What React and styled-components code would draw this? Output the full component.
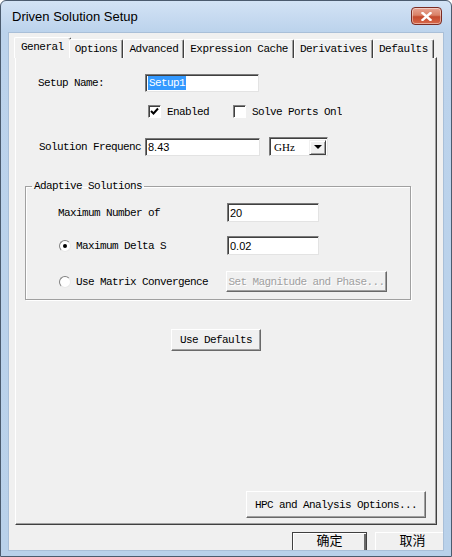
import styled, { createGlobalStyle } from "styled-components"

const GlobalStyle = createGlobalStyle`
  html, body { margin: 0; padding: 0; background: #ffffff; }
  #root { width: 452px; height: 557px; }
`

const mono = `"Liberation Mono", "DejaVu Sans Mono", monospace`

const Window = styled.div`
  width: 452px;
  height: 557px;
  box-sizing: border-box;
  display: flex;
  flex-direction: column;
  border: 1px solid #4b5b6e;
  border-radius: 6px 6px 0 0;
  background: linear-gradient(#d3e3f5 0px, #bcd3ec 30px, #b9d1ea 100%);
  overflow: hidden;
`

const TitleBar = styled.div`
  height: 29px;
  flex: none;
  display: flex;
  align-items: center;
  justify-content: space-between;
  padding: 0 9px 2px 11px;
`

const Title = styled.span`
  font-family: "Liberation Sans", Arial, sans-serif;
  font-size: 13px;
  color: #000;
  margin-top: 2px;
`

const CloseButton = styled.div`
  width: 31px;
  height: 18px;
  margin-top: 1px;
  border: 1px solid #7a2b22;
  border-radius: 4px;
  box-sizing: border-box;
  background: linear-gradient(#e8a493 0%, #d98167 45%, #c44a2e 55%, #d8694a 100%);
  box-shadow: inset 0 0 0 1px rgba(255, 255, 255, 0.45);
  display: flex;
  align-items: center;
  justify-content: center;
`

const Client = styled.div`
  flex: 1;
  margin: 0 7px 5px 7px;
  background: #f0f0f0;
  border: 1px solid #a9bfd8;
  display: flex;
  flex-direction: column;
  padding: 4px 6px 0 6px;
  overflow: hidden;
`

const TabStrip = styled.div`
  display: flex;
  align-items: flex-end;
  height: 21px;
  flex: none;
  padding-left: 1px;
  position: relative;
  z-index: 1;
  margin-bottom: -1px;
`

const Tab = styled.div`
  font-family: ${mono};
  font-size: 11px;
  letter-spacing: -0.5px;
  color: #000;
  box-sizing: border-box;
  height: ${p => (p.$active ? "21px" : "19px")};
  padding: ${p => (p.$active ? "0 6px" : "0 5px")};
  margin: ${p => (p.$active ? "0 -2px 0 -2px" : "0")};
  display: flex;
  align-items: center;
  padding-bottom: ${p => (p.$active ? "3px" : "1px")};
  background: #f0f0f0;
  border-top: 1px solid #ffffff;
  border-left: 1px solid #ffffff;
  border-right: 1px solid #404040;
  box-shadow: inset -1px 0 #a0a0a0;
  border-radius: 2px 2px 0 0;
  white-space: nowrap;
`

const Panel = styled.div`
  width: 422px;
  height: 468px;
  flex: none;
  box-sizing: border-box;
  border-top: 1px solid #ffffff;
  border-left: 1px solid #ffffff;
  border-right: 1px solid #404040;
  border-bottom: 1px solid #404040;
  box-shadow: inset -1px -1px #a0a0a0;
  display: flex;
  flex-direction: column;
  padding: 16px 0 0 0;
`

const Label = styled.span`
  font-family: ${mono};
  font-size: 11px;
  letter-spacing: -0.6px;
  color: ${p => (p.$disabled ? "#a0a0a0" : "#000")};
  width: ${p => p.$w || "auto"};
  flex: none;
  white-space: nowrap;
  overflow: hidden;
`

const Row = styled.div`
  display: flex;
  align-items: center;
  flex: none;
  margin-left: ${p => p.$left || 0}px;
  margin-top: ${p => p.$top || 0}px;
`

const TextBox = styled.div`
  width: ${p => p.$w}px;
  height: ${p => p.$h || 18}px;
  box-sizing: border-box;
  background: #ffffff;
  border-top: 1px solid #7a7a7a;
  border-left: 1px solid #7a7a7a;
  border-right: 1px solid #e3e3e3;
  border-bottom: 1px solid #e3e3e3;
  box-shadow: inset 1px 1px #404040;
  display: flex;
  align-items: center;
  padding-left: 2px;
  font-family: "Liberation Sans", Arial, sans-serif;
  font-size: 11px;
  color: #000;
`

const Selected = styled.span`
  background: #3399ff;
  color: #fff;
  font-family: ${mono};
  letter-spacing: -0.6px;
  padding: 1px 1px;
`

const Check = styled.div`
  width: 13px;
  height: 13px;
  box-sizing: border-box;
  background: #fff;
  border-top: 1px solid #808080;
  border-left: 1px solid #808080;
  border-right: 1px solid #ffffff;
  border-bottom: 1px solid #ffffff;
  box-shadow: inset 1px 1px #404040;
  display: flex;
  align-items: center;
  justify-content: center;
  margin-right: 6px;
  flex: none;
`

const Radio = styled.div`
  width: 12px;
  height: 12px;
  box-sizing: border-box;
  border-radius: 50%;
  background: #fff;
  border: 1px solid;
  border-color: #808080 #e8e8e8 #e8e8e8 #808080;
  display: flex;
  align-items: center;
  justify-content: center;
  margin-right: 5px;
  flex: none;
  &::after {
    content: "";
    width: 4px;
    height: 4px;
    border-radius: 50%;
    background: ${p => (p.$on ? "#000" : "transparent")};
  }
`

const Button = styled.div`
  width: ${p => p.$w}px;
  height: ${p => p.$h || 22}px;
  box-sizing: border-box;
  background: #f0f0f0;
  border-top: 1px solid #ffffff;
  border-left: 1px solid #ffffff;
  border-right: 1px solid #696969;
  border-bottom: 1px solid #696969;
  box-shadow: inset -1px -1px #a0a0a0;
  display: flex;
  align-items: center;
  justify-content: center;
  font-family: ${mono};
  font-size: 11px;
  letter-spacing: -0.6px;
  color: ${p => (p.$disabled ? "#a0a0a0" : "#000")};
  text-shadow: ${p => (p.$disabled ? "1px 1px #ffffff" : "none")};
  white-space: nowrap;
  flex: none;
`

const Select = styled.div`
  width: 59px;
  height: 19px;
  box-sizing: border-box;
  background: #fff;
  border-top: 1px solid #7a7a7a;
  border-left: 1px solid #7a7a7a;
  border-right: 1px solid #e3e3e3;
  border-bottom: 1px solid #e3e3e3;
  box-shadow: inset 1px 1px #404040;
  display: flex;
  align-items: center;
  justify-content: space-between;
  padding: 2px 1px 1px 4px;
  font-family: "Liberation Serif", serif;
  font-size: 11px;
`

const Arrow = styled.div`
  width: 17px;
  height: 15px;
  box-sizing: border-box;
  background: #f0f0f0;
  border-top: 1px solid #f0f0f0;
  border-left: 1px solid #f0f0f0;
  border-right: 1px solid #404040;
  border-bottom: 1px solid #404040;
  box-shadow: inset 1px 1px #fff, inset -1px -1px #a0a0a0;
  display: flex;
  align-items: center;
  justify-content: center;
  &::after {
    content: "";
    border-left: 4px solid transparent;
    border-right: 4px solid transparent;
    border-top: 4px solid #000;
  }
`

const Group = styled.fieldset`
  margin: 24px 0 0 9px;
  width: 386px;
  height: 120px;
  flex: none;
  box-sizing: border-box;
  padding: 0;
  border: 1px solid #a0a0a0;
  box-shadow: 1px 1px #ffffff, inset 1px 1px #ffffff;
  display: flex;
  flex-direction: column;
`

const Legend = styled.legend`
  font-family: ${mono};
  font-size: 11px;
  letter-spacing: -0.6px;
  margin-left: 6px;
  padding: 0 2px;
  color: #000;
`

const Spacer = styled.div`
  flex: 1;
`

const Footer = styled.div`
  display: flex;
  flex: none;
  gap: 8px;
  margin: 7px 0 0 277px;
`

const CnButton = styled.div`
  width: ${p => p.$w}px;
  height: 24px;
  box-sizing: border-box;
  background: #f0f0f0;
  border: 1px solid ${p => (p.$default ? "#404040" : "#ffffff")};
  border-right-color: ${p => (p.$default ? "#404040" : "#696969")};
  box-shadow: ${p => (p.$default ? "inset 1px 1px #ffffff, inset -2px 0 #696969" : "inset -1px 0 #a0a0a0")};
  display: flex;
  align-items: flex-start;
  justify-content: center;
  font-family: "Noto Sans CJK SC", sans-serif;
  font-size: 13px;
  line-height: 14px;
  color: #000;
  padding-top: 0;
  flex: none;
`

const tabs = ["General", "Options", "Advanced", "Expression Cache", "Derivatives", "Defaults"]

export default function App() {
  return (
    <>
      <GlobalStyle />
      <Window>
        <TitleBar>
          <Title>Driven Solution Setup</Title>
          <CloseButton>
            <svg width="11" height="9" viewBox="0 0 11 9">
              <path d="M1.5 1 L9.5 8 M9.5 1 L1.5 8" stroke="#fff" strokeWidth="2.4" strokeLinecap="square" />
            </svg>
          </CloseButton>
        </TitleBar>
        <Client>
          <TabStrip>
            {tabs.map((t, i) => (
              <Tab key={t} $active={i === 0}>{t}</Tab>
            ))}
          </TabStrip>
          <Panel>
            <Row $left={22}>
              <Label $w="107px">Setup Name:</Label>
              <TextBox $w={114}><Selected>Setup1</Selected></TextBox>
            </Row>
            <Row $left={132} $top={13}>
              <Check>
                <svg width="9" height="9" viewBox="0 0 9 9">
                  <path d="M1 4 L3.5 6.5 L8 1.5" stroke="#000" strokeWidth="2" fill="none" />
                </svg>
              </Check>
              <Label $w="66px">Enabled</Label>
              <Check />
              <Label>Solve Ports Onl</Label>
            </Row>
            <Row $left={23} $top={19}>
              <Label $w="106px">Solution Frequenc</Label>
              <TextBox $w={115}>8.43</TextBox>
              <Row $left={9}>
                <Select>GHz<Arrow /></Select>
              </Row>
            </Row>
            <Group>
              <Legend>Adaptive Solutions</Legend>
              <Row $left={32} $top={11}>
                <Label $w="169px">Maximum Number of</Label>
                <TextBox $w={92} $h={19}>20</TextBox>
              </Row>
              <Row $left={33} $top={14}>
                <Radio $on />
                <Label $w="151px">Maximum Delta S</Label>
                <TextBox $w={92} $h={19}>0.02</TextBox>
              </Row>
              <Row $left={33} $top={16}>
                <Radio />
                <Label $w="150px">Use Matrix Convergence</Label>
                <Button $w={161} $h={21} $disabled>Set Magnitude and Phase...</Button>
              </Row>
            </Group>
            <Row $left={155} $top={29}>
              <Button $w={90} $h={22}>Use Defaults</Button>
            </Row>
            <Spacer />
            <Row $left={230}>
              <Button $w={180} $h={27}>HPC and Analysis Options...</Button>
            </Row>
            <Row $top={6} />
          </Panel>
          <Footer>
            <CnButton $w={75} $default>确定</CnButton>
            <CnButton $w={75}>取消</CnButton>
          </Footer>
        </Client>
      </Window>
    </>
  )
}
